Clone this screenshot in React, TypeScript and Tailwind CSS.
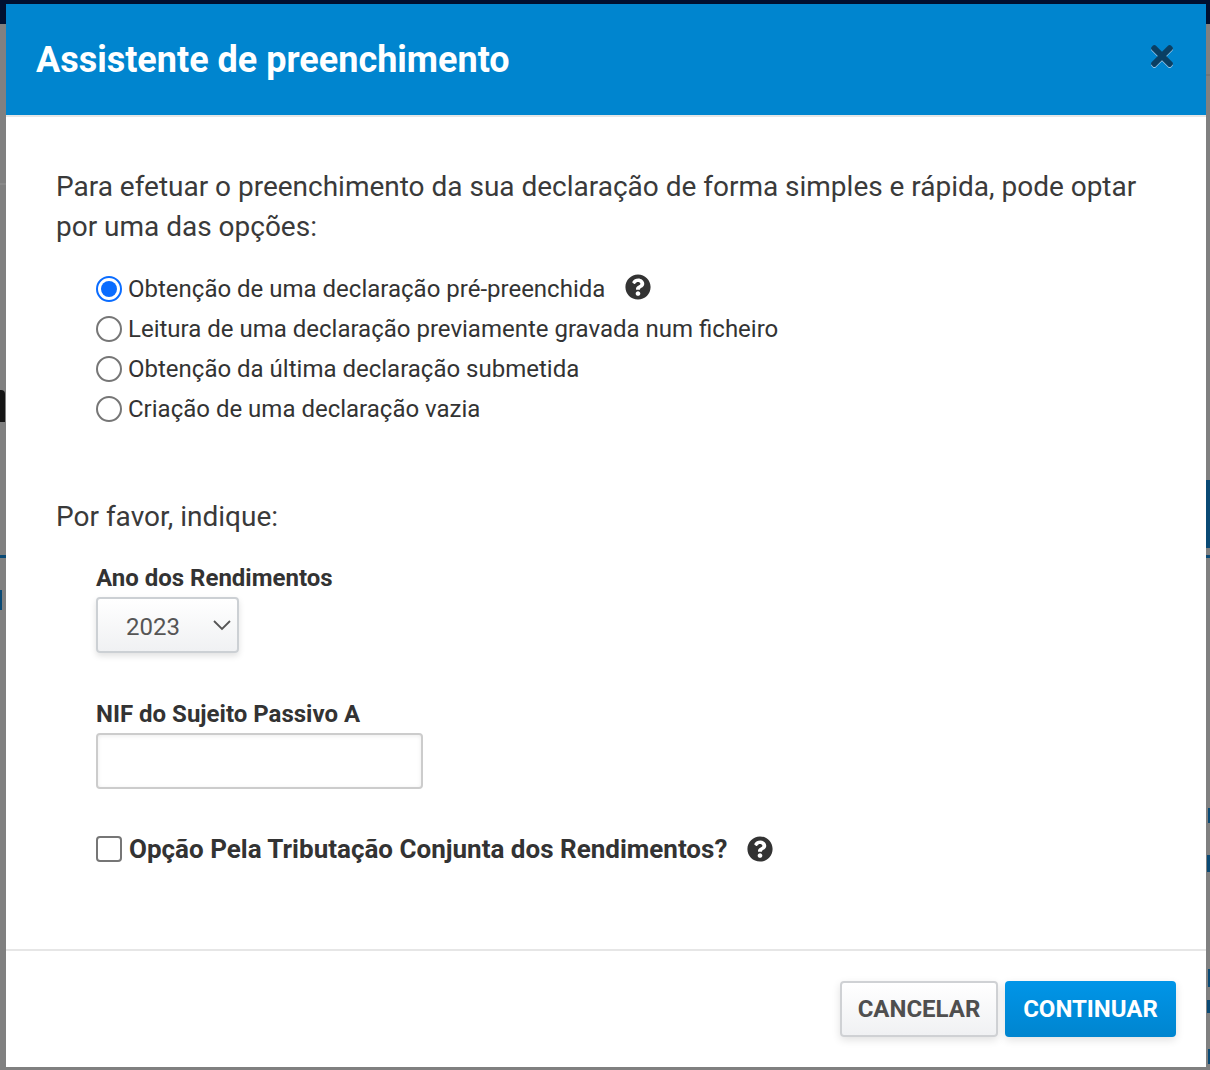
import { FaQuestionCircle, FaTimes } from "react-icons/fa";

const options = [
  "Obtenção de uma declaração pré-preenchida",
  "Leitura de uma declaração previamente gravada num ficheiro",
  "Obtenção da última declaração submetida",
  "Criação de uma declaração vazia",
];

function PageBehind() {
  return (
    <div className="absolute inset-0 bg-[#808080]">
      <div className="absolute left-0 top-0 h-[24px] w-full bg-[#001030]" />
      <div className="absolute left-0 top-[183px] h-[2px] w-[6px] bg-[#8a8a8a]" />
      <div className="absolute right-0 top-[74px] h-[2px] w-[4px] bg-[#767676]" />
      <div className="absolute left-0 top-[390px] h-[32px] w-[5px] rounded-tr-[4px] bg-[#151515]" />
      <div className="absolute left-0 top-[555px] h-[3px] w-full bg-[#0a4a75]" />
      <div className="absolute left-0 top-[590px] h-[20px] w-[2px] bg-[#0a4a75]" />
      <div className="absolute right-0 top-[480px] h-[68px] w-[4px] bg-[#0a4a75]" />
      <div className="absolute right-0 top-[808px] h-[15px] w-[2px] bg-[#0a4a75]" />
      <div className="absolute right-0 top-[855px] h-[17px] w-[3px] bg-[#0a4a75]" />
      <div className="absolute right-0 top-[969px] h-[18px] w-[2px] bg-[#0a4a75]" />
      <div className="absolute right-0 top-[1000px] h-[13px] w-[3px] bg-[#0a4a75]" />
      <div className="absolute right-0 top-[1049px] h-[15px] w-[2px] bg-[#0a4a75]" />
    </div>
  );
}

export default function App() {
  return (
    <div className="relative h-[1070px] w-[1210px] overflow-hidden font-['Roboto',sans-serif] text-[#333333]">
      <PageBehind />
      <div className="relative ml-[6px] flex h-[1067px] w-[1200px] flex-col bg-white pt-[4px]">
        <div className="absolute left-0 top-0 h-[4px] w-full bg-[#001030]" />
        <header className="flex h-[113px] items-start justify-between border-b-2 border-[#e6e6e6] bg-[#0085cf] pl-[30px] pr-[29px]">
          <h1 className="mt-[32px] text-[36px] font-bold leading-[48px] text-white">
            Assistente de preenchimento
          </h1>
          <button type="button" className="mt-[36px] text-[#0a3f63] [filter:drop-shadow(0_1px_0_#9cc6e6)]">
            <FaTimes className="h-[32px] w-[30px]" />
          </button>
        </header>

        <main className="flex-1 px-[50px] pt-[50px]">
          <p className="text-[28px] leading-[40px] tracking-[-0.01px] text-[#3a3a3a]">
            Para efetuar o preenchimento da sua declaração de forma simples e rápida, pode optar por uma das opções:
          </p>
          <div className="mt-[22px] flex flex-col pl-[40px]">
            {options.map((option, index) => (
              <label key={option} className="flex h-[40px] items-center text-[24px]">
                {index === 0 ? (
                  <span className="flex h-[26px] w-[26px] items-center justify-center rounded-full border-2 border-[#0a6cff]">
                    <span className="h-[16px] w-[16px] rounded-full bg-[#0a6cff]" />
                  </span>
                ) : (
                  <span className="h-[26px] w-[26px] rounded-full border-2 border-[#767676]" />
                )}
                <span className="ml-[6px]">{option}</span>
                {index === 0 ? <FaQuestionCircle className="mb-[5px] ml-[20px] h-[26px] w-[26px] text-[#333333]" /> : null}
              </label>
            ))}
          </div>

          <p className="mt-[68px] text-[28px] leading-[40px] text-[#3a3a3a]">Por favor, indique:</p>

          <div className="mt-[21px] pl-[40px]">
            <div className="text-[24px] font-bold leading-[40px]">Ano dos Rendimentos</div>
            <div className="mt-[-1px] flex h-[56px] w-[143px] items-center justify-between rounded-[4px] border-2 border-[#ccd0d4] bg-gradient-to-b from-white to-[#f0f1f3] pl-[28px] pr-[5px] text-[24px] text-[#555555] shadow-[0_3px_6px_rgba(0,0,0,0.12)]">
              <span className="mt-[4px]">2023</span>
              <svg width="20" height="12" viewBox="0 0 20 12" fill="none" stroke="#555555" strokeWidth="1.8">
                <path d="M2 2l8 8 8-8" />
              </svg>
            </div>

            <div className="mt-[41px] text-[24px] font-bold leading-[40px]">NIF do Sujeito Passivo A</div>
            <input
              type="text"
              className="mt-[-1px] block h-[56px] w-[327px] rounded-[4px] border-2 border-[#cccccc] bg-white shadow-[inset_0_1px_4px_rgba(0,0,0,0.08)]"
            />

            <div className="mt-[40px] flex h-[40px] items-center text-[26px] font-bold">
              <span className="h-[26px] w-[26px] rounded-[4px] border-2 border-[#767676]" />
              <span className="ml-[7px]">Opção Pela Tributação Conjunta dos Rendimentos?</span>
              <FaQuestionCircle className="mb-[1px] ml-[20px] h-[26px] w-[26px]" />
            </div>
          </div>
        </main>

        <footer className="flex h-[118px] items-start justify-end gap-[7px] border-t-2 border-[#e6e6e6] pr-[30px] pt-[30px]">
          <button
            type="button"
            className="h-[56px] w-[158px] rounded-[4px] border-2 border-[#cfd1d4] bg-gradient-to-b from-white to-[#f0f1f3] text-[24px] font-bold text-[#4f4f4f] shadow-[0_3px_8px_rgba(0,0,0,0.12)]"
          >
            CANCELAR
          </button>
          <button
            type="button"
            className="h-[56px] w-[171px] rounded-[4px] bg-gradient-to-b from-[#0095e8] to-[#0085cf] text-[24px] font-bold text-white shadow-[0_3px_8px_rgba(0,0,0,0.12)]"
          >
            CONTINUAR
          </button>
        </footer>
      </div>
    </div>
  );
}
